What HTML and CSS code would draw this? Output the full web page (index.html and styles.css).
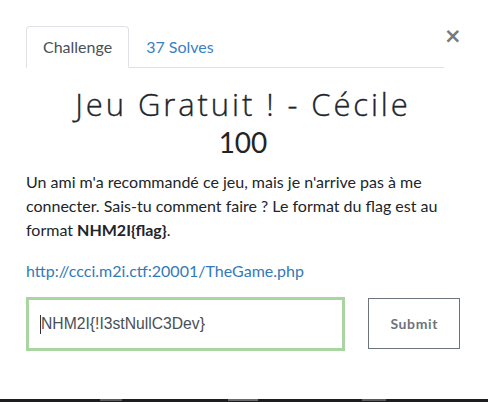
FILE: index.html
```html
<!DOCTYPE html>
<html>
<head>
<meta charset="utf-8">
<link rel="stylesheet" href="styles.css">
</head>
<body>
<div class="modal">
  <div class="top">
    <ul class="tabs">
      <li class="tab active">Challenge</li>
      <li class="tab link-tab">37 Solves</li>
    </ul>
    <button class="close" aria-label="Close">&times;</button>
  </div>
  <h2 class="title">Jeu Gratuit ! - Cécile</h2>
  <h3 class="value">100</h3>
  <p class="desc">Un ami m'a recommandé ce jeu, mais je n'arrive pas à me connecter. Sais-tu comment faire ? Le format du flag est au format <strong>NHM2I{flag}</strong>.</p>
  <p class="url"><a href="#">http://ccci.m2i.ctf:20001/TheGame.php</a></p>
  <div class="form-row">
    <div class="input"><span class="caret"></span>NHM2I{!I3stNullC3Dev}</div>
    <button class="submit">Submit</button>
  </div>
</div>
<div class="footer-strip">
  <span class="blip b1"></span><span class="blip b2"></span><span class="blip b3"></span>
</div>
</body>
</html>
```
FILE: styles.css
```css
html, body {
  margin: 0;
  padding: 0;
  background: #fff;
  height: 402px;
  overflow: hidden;
}
body {
  font-family: Lato, "Open Sans", sans-serif;
  color: #212529;
  display: flex;
  flex-direction: column;
}
.modal {
  padding: 26px 28px 0 26px;
  height: 374px;
}
.top {
  display: flex;
  align-items: flex-start;
}
.tabs {
  list-style: none;
  margin: 0;
  padding: 0;
  display: flex;
  width: 420px;
  border-bottom: 1px solid #dee2e6;
}
.tab {
  padding: 8px 16px;
  font-size: 16px;
  line-height: 24px;
  border: 1px solid transparent;
  border-top-left-radius: 4px;
  border-top-right-radius: 4px;
  margin-bottom: -1px;
}
.tab.active {
  color: #495057;
  border-color: #dee2e6 #dee2e6 #fff;
}
.link-tab {
  color: #3a81c4;
}
.close {
  margin-left: auto;
  margin-right: 4px;
  border: 0;
  background: none;
  padding: 0;
  width: 12px;
  font-family: "DejaVu Sans", sans-serif;
  font-size: 21px;
  line-height: 18px;
  font-weight: bold;
  color: #7a7a7a;
  margin-top: 1px;
}
.title {
  margin: 16px 0 0;
  text-align: center;
  font-family: "Open Sans", sans-serif;
  font-weight: 300;
  font-size: 31px;
  letter-spacing: 2.9px;
  line-height: 40px;
  color: #212529;
  -webkit-text-stroke: 0.35px #212529;
}
.value {
  margin: 0;
  text-align: center;
  font-weight: 400;
  font-size: 28px;
  line-height: 36px;
  color: #212529;
}
.desc {
  margin: 10px 0 0;
  font-size: 16px;
  line-height: 24px;
}
.desc strong {
  font-weight: 700;
}
.url {
  margin: 17px 0 0;
  font-size: 16px;
  line-height: 24px;
}
.url a {
  color: #337ab7;
  text-decoration: none;
}
.form-row {
  margin-top: 14px;
  display: flex;
  align-items: flex-start;
  gap: 23px;
}
.input {
  box-sizing: border-box;
  width: 321px;
  height: 54px;
  border: 3px solid #a8d5a0;
  padding: 0 11px;
  display: flex;
  align-items: center;
  font-family: "Liberation Sans", Arial, sans-serif;
  font-size: 15.7px;
  color: #495057;
}
.caret {
  display: inline-block;
  width: 1px;
  height: 19px;
  background: #333;
}
.submit {
  box-sizing: border-box;
  width: 92px;
  height: 51px;
  margin-top: 1px;
  border: 1px solid #6c757d;
  background: #fff;
  color: #6c757d;
  font-family: Lato, sans-serif;
  font-weight: 700;
  font-size: 14px;
  letter-spacing: 0.6px;
}
.footer-strip {
  margin-top: auto;
  height: 3px;
  background: #1d1d1f;
  position: relative;
}
.blip {
  position: absolute;
  top: 0;
  height: 2px;
  background: #5a5a5e;
}
.b1 { left: 100px; width: 22px; }
.b2 { left: 228px; width: 30px; background: #6a6a6e; }
.b3 { left: 362px; width: 24px; }
```
